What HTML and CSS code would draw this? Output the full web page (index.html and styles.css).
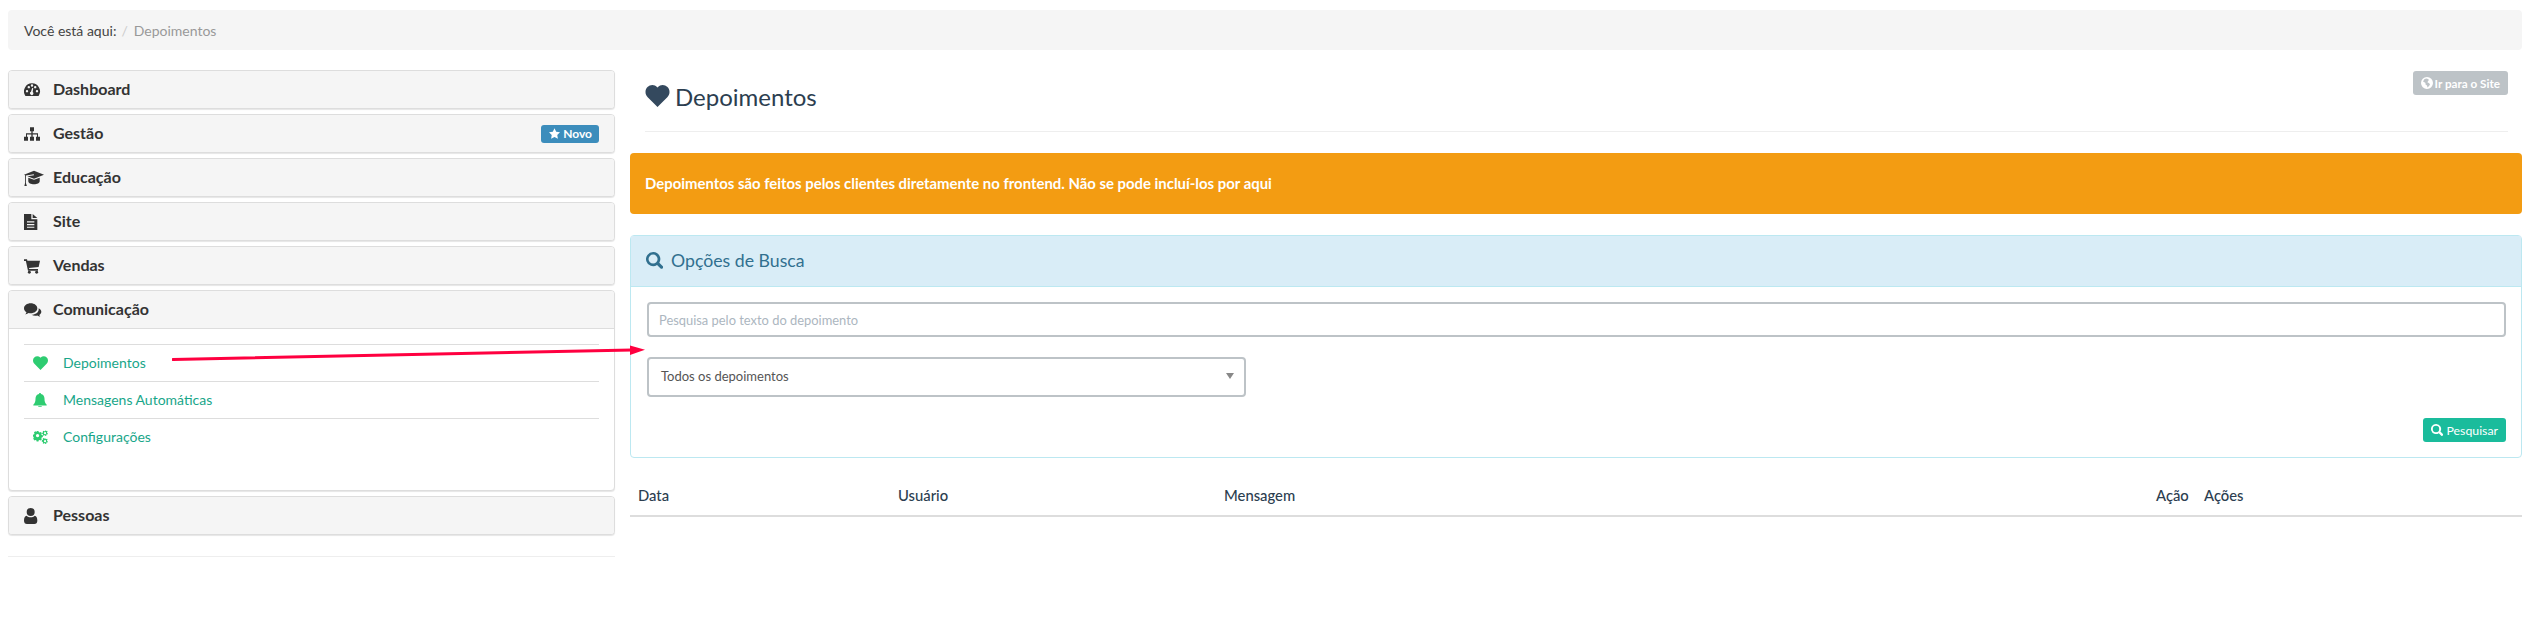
FILE: index.html
```html
<!DOCTYPE html>
<html lang="pt-BR">
<head>
    <meta charset="UTF-8">
    <title>Depoimentos</title>
    <link rel="stylesheet" href="styles.css">
</head>
<body>
    <svg class="icon-defs" width="0" height="0">
        <symbol id="i-heart" viewBox="0 0 24 22"><path d="M12 22 2.200 12.200C-.7 9.300-.7 4.700 2 2.100c2.800-2.700 7-2.700 9.700.1l.3.4.3-.4c2.700-2.800 6.900-2.800 9.700-.1 2.700 2.600 2.700 7.200-.2 10.100z"/></symbol>
        <symbol id="i-search" viewBox="0 0 24 24"><path d="M10 0a10 10 0 1 0 5.600 18.300l5 5a2.300 2.300 0 0 0 3.200-3.200l-5-5A10 10 0 0 0 10 0zm0 3.600a6.400 6.400 0 1 1 0 12.800 6.400 6.400 0 0 1 0-12.800z"/></symbol>
        <symbol id="i-dashboard" viewBox="0 0 24 24" preserveAspectRatio="xMinYMid"><path fill-rule="evenodd" d="M12 2a12 12 0 0 0-10.300 18.200c.3.500.8.800 1.400.8h17.800c.6 0 1.100-.3 1.400-.8A12 12 0 0 0 12 2zM4.500 15.500a1.800 1.800 0 1 1 0-3.600 1.800 1.800 0 0 1 0 3.600zm2.700-6a1.800 1.800 0 1 1 0-3.600 1.800 1.800 0 0 1 0 3.600zM12 7a1.800 1.800 0 1 1 0-3.600A1.800 1.800 0 0 1 12 7zm1.800 11.200a2.500 2.500 0 1 1-3.300-3.500L12.200 9l1.700.5-.9 5.500c1 .6 1.400 2 .8 3.200zm3-8.700a1.800 1.800 0 1 1 0-3.600 1.800 1.800 0 0 1 0 3.600zm2.700 6a1.800 1.800 0 1 1 0-3.600 1.800 1.800 0 0 1 0 3.600z"/></symbol>
        <symbol id="i-sitemap" viewBox="0 0 24 24" preserveAspectRatio="xMinYMid"><path d="M9 2h6v6h-2v3h8v5h3v6h-6v-6h1.500v-3.300H13V16h2v6H9v-6h2v-3.300H4.500V16H6v6H0v-6h3v-5h8V8H9z"/></symbol>
        <symbol id="i-cap" viewBox="0 0 28 22" preserveAspectRatio="xMinYMid"><path d="M14 1 28 6.500 14 12 4.800 8.400 14 7l-.3-1.200-11 1.700v10.600l1.300 4H.5l1-4V7.100L0 6.500zM6 10.500l8 3.100 8-3.100v5c0 2.400-3.600 4.300-8 4.300s-8-1.900-8-4.300z"/></symbol>
        <symbol id="i-file" viewBox="0 0 20 24" preserveAspectRatio="xMinYMid"><path fill-rule="evenodd" d="M0 0h11v8h9v16H0zM4.500 11v1.700h11V11zm0 4v1.700h11V15zm0 4v1.700h11V19zM13 0l7 6h-7z"/></symbol>
        <symbol id="i-cart" viewBox="0 0 24 24" preserveAspectRatio="xMinYMid"><path d="M0 2h4.500l.6 2H24l-2 9.500L7.500 15l.4 1.500H21v2.500H6L2.800 4.500H0z"/><circle cx="8" cy="21.500" r="2.200"/><circle cx="19" cy="21.500" r="2.200"/></symbol>
        <symbol id="i-comments" viewBox="0 0 26 24" preserveAspectRatio="xMinYMid"><path d="M10 2c5.500 0 10 3.300 10 7.500S15.500 17 10 17c-1 0-2-.1-3-.4C5.600 17.600 4 18.300 2 18.600c.8-1 1.400-2 1.700-3.200C1.400 14 0 11.900 0 9.500 0 5.300 4.500 2 10 2z"/><path d="M22 9.500c2.500 1.200 4 3 4 5.200 0 1.900-1.200 3.600-3 4.700.2 1.100.8 2 1.500 2.900-1.700-.2-3.300-.9-4.500-1.900-1 .3-2 .4-3 .4-2.200 0-4.200-.6-5.700-1.600 5.900-.2 10.700-3.600 10.700-8z"/></symbol>
        <symbol id="i-user" viewBox="0 0 20 24" preserveAspectRatio="xMinYMid"><circle cx="10" cy="6" r="6"/><path d="M4 11.500c1.500 1.500 3.500 2.300 6 2.300s4.500-.8 6-2.300c2.700.4 4 3 4 7.500 0 3-1.700 5-4.500 5h-11C1.700 24 0 22 0 19c0-4.500 1.300-7.100 4-7.500z"/></symbol>
        <symbol id="i-bell" viewBox="0 0 24 24" preserveAspectRatio="xMinYMid"><path d="M12 0c1 0 1.700.7 1.700 1.700 3.700.7 6 3.700 6 7.800 0 5 .8 8 3.800 10.500v1.500H.5V20c3-2.500 3.800-5.500 3.800-10.500 0-4.100 2.300-7.100 6-7.800C10.300.7 11 0 12 0zM9 22.500h6a3 3 0 0 1-6 0z"/></symbol>
        <symbol id="i-cogs" viewBox="0 0 26 24" preserveAspectRatio="xMinYMid"><path fill-rule="evenodd" d="M7 5h3.500l.6 2.200 1.600.7 2-1.100 2.400 2.400-1.100 2 .7 1.600 2.300.6v3.400l-2.300.6-.7 1.600 1.100 2-2.400 2.400-2-1.100-1.600.7-.6 2.200H7l-.6-2.200-1.600-.7-2 1.100L.4 19.800l1.100-2-.7-1.600L0 15.600v-3.400l2.200-.6.700-1.600-1.100-2 2.400-2.400 2 1.100 1.600-.7zm1.800 5.700a3.200 3.200 0 1 0 0 6.400 3.200 3.200 0 0 0 0-6.400z" transform="translate(0 -3) scale(.9)"/><path fill-rule="evenodd" d="M21 0l.5 1.500 1.500.4 1.300-.7 1 1.700-1 1 .2 1.600 1.300.7-.5 1.900-1.500-.1-1 1.200.3 1.500-1.900.5-.8-1.300-1.600-.1-1 1.100-1.600-1 .5-1.400-.8-1.400-1.500-.3V5.400l1.500-.3.800-1.400-.5-1.400 1.600-1 1 1.100 1.600-.1zm-.5 3.800a2 2 0 1 0 0 4 2 2 0 0 0 0-4z" transform="translate(2)  scale(.92)"/><path fill-rule="evenodd" d="M21 14l.5 1.500 1.500.4 1.300-.7 1 1.700-1 1 .2 1.600 1.300.7-.5 1.900-1.500-.1-1 1.200.3 1.500-1.900.5-.8-1.300-1.600-.1-1 1.100-1.600-1 .5-1.400-.8-1.400-1.500-.3v-2.800l1.500-.3.800-1.400-.5-1.400 1.600-1 1 1.100 1.600-.1zm-.5 3.800a2 2 0 1 0 0 4 2 2 0 0 0 0-4z" transform="translate(2 1) scale(.92)"/></symbol>
        <symbol id="i-star" viewBox="0 0 24 23"><path d="M12 0l3.700 7.600 8.300 1.200-6 5.900 1.400 8.300-7.400-3.900L4.600 23 6 14.700 0 8.800l8.300-1.200z"/></symbol>
        <symbol id="i-globe" viewBox="0 0 24 24"><path fill-rule="evenodd" d="M12 0a12 12 0 1 0 0 24 12 12 0 0 0 0-24zM7 4l4-1 3 1 2 2-2 2-1 3 3 1 2 3-2 3-3 3-1-4-3-2v-3L6 10l-2-1z"/></symbol>
    </svg>

    <div class="breadcrumb">
        <span>Você está aqui:</span>
        <span class="sep">/</span>
        <span class="current">Depoimentos</span>
    </div>

    <div class="layout">
        <aside class="sidebar">
            <div class="menu-panel">
                <div class="menu-head"><svg class="ico"><use href="#i-dashboard"/></svg><span class="label">Dashboard</span></div>
            </div>
            <div class="menu-panel">
                <div class="menu-head"><svg class="ico"><use href="#i-sitemap"/></svg><span class="label">Gestão</span>
                    <span class="badge"><svg class="ico-star"><use href="#i-star"/></svg>Novo</span>
                </div>
            </div>
            <div class="menu-panel">
                <div class="menu-head"><svg class="ico ico-wide"><use href="#i-cap"/></svg><span class="label">Educação</span></div>
            </div>
            <div class="menu-panel">
                <div class="menu-head"><svg class="ico"><use href="#i-file"/></svg><span class="label">Site</span></div>
            </div>
            <div class="menu-panel">
                <div class="menu-head"><svg class="ico"><use href="#i-cart"/></svg><span class="label">Vendas</span></div>
            </div>
            <div class="menu-panel">
                <div class="menu-head open"><svg class="ico"><use href="#i-comments"/></svg><span class="label">Comunicação</span></div>
                <ul class="submenu">
                    <li><svg class="ico-sub"><use href="#i-heart"/></svg><a href="#">Depoimentos</a></li>
                    <li><svg class="ico-sub"><use href="#i-bell"/></svg><a href="#">Mensagens Automáticas</a></li>
                    <li><svg class="ico-sub"><use href="#i-cogs"/></svg><a href="#">Configurações</a></li>
                </ul>
            </div>
            <div class="menu-panel">
                <div class="menu-head"><svg class="ico"><use href="#i-user"/></svg><span class="label">Pessoas</span></div>
            </div>
            <hr class="side-rule">
        </aside>

        <main class="content">
            <div class="page-header">
                <h1><svg class="ico-title"><use href="#i-heart"/></svg>Depoimentos</h1>
                <a class="btn-site" href="#"><svg class="ico-globe"><use href="#i-globe"/></svg>Ir para o Site</a>
            </div>

            <div class="alert">Depoimentos são feitos pelos clientes diretamente no frontend. Não se pode incluí-los por aqui</div>

            <section class="search-panel">
                <div class="search-head"><svg class="ico-search"><use href="#i-search"/></svg>Opções de Busca</div>
                <div class="search-body">
                    <input class="search-input" type="text" placeholder="Pesquisa pelo texto do depoimento">
                    <div class="select-box"><span>Todos os depoimentos</span><b class="caret"></b></div>
                    <div class="search-actions">
                        <button class="btn-search" type="button"><svg class="ico-btn"><use href="#i-search"/></svg>Pesquisar</button>
                    </div>
                </div>
            </section>

            <table class="list">
                <thead>
                    <tr>
                        <th class="col-date">Data</th>
                        <th class="col-user">Usuário</th>
                        <th class="col-msg">Mensagem</th>
                        <th class="col-act">Ação</th>
                        <th>Ações</th>
                    </tr>
                </thead>
            </table>
        </main>
    </div>

    <svg class="arrow" width="480" height="20" viewBox="0 0 480 20">
        <path d="M1 14.500 460 5" stroke="#ff0040" stroke-width="3" stroke-linecap="round"/>
        <path d="M458 .5 473 4.800 458 10z" fill="#ff0040"/>
    </svg>
</body>
</html>
```

FILE: styles.css
```css
body {
    position: relative;
    margin: 0;
    padding: 10px 10px 0 8px;
    font-family: Lato, "Liberation Sans", sans-serif;
    font-size: 14px;
    color: #2c3e50;
    background: #fff;
}

.icon-defs {
    position: absolute;
}

svg {
    fill: currentColor;
}

.breadcrumb {
    display: flex;
    align-items: center;
    gap: 5px;
    height: 40px;
    padding-left: 16px;
    margin-bottom: 20px;
    background: #f5f5f5;
    border-radius: 4px;
    color: #444;
}

.breadcrumb .sep {
    color: #ccc;
}

.breadcrumb .current {
    margin-left: 1px;
    color: #999;
}

.layout {
    display: flex;
    gap: 15px;
}

.sidebar {
    flex: 0 0 607px;
}

.menu-panel {
    margin-bottom: 5px;
    background: #fff;
    border: 1px solid #ddd;
    border-radius: 4px;
    box-shadow: 0 1px 1px rgba(0, 0, 0, 0.1);
}

.menu-head {
    display: flex;
    align-items: center;
    height: 37px;
    padding: 0 15px;
    background: #f5f5f5;
    border-radius: 3px;
    font-size: 16px;
    font-weight: 700;
    color: #333;
}

.menu-head .label {
    padding-bottom: 2px;
}

.menu-head.open {
    border-bottom: 1px solid #ddd;
    border-radius: 3px 3px 0 0;
}

.ico {
    flex: 0 0 auto;
    width: 18px;
    height: 16px;
    margin-right: 11px;
}

.ico-wide {
    width: 20px;
    margin-right: 9px;
}

.badge {
    display: flex;
    align-items: center;
    margin-left: auto;
    height: 18px;
    padding: 0 7px 0 8px;
    background: #3c8dbc;
    border-radius: 3px;
    color: #fff;
    font-size: 12px;
}

.ico-star {
    width: 11px;
    height: 11px;
    margin-right: 3px;
}

.submenu {
    list-style: none;
    margin: 15px 15px 0;
    padding: 0 0 35px;
}

.submenu li {
    display: flex;
    align-items: center;
    box-sizing: border-box;
    height: 37px;
    padding: 0 0 1px 9px;
    border-top: 1px solid #ddd;
    color: #2ecc71;
}

.submenu a {
    color: #18a689;
    text-decoration: none;
}

.ico-sub {
    flex: 0 0 auto;
    width: 15px;
    height: 14px;
    margin-right: 15px;
}

.side-rule {
    margin: 21px 0 0;
    border: 0;
    border-top: 1px solid #eee;
}

.content {
    flex: 1;
    min-width: 0;
}

.page-header {
    display: flex;
    justify-content: space-between;
    margin: 1px 14px 21px 15px;
    height: 60px;
    border-bottom: 1px solid #eee;
}

.page-header h1 {
    display: flex;
    align-items: center;
    height: 50px;
    margin: 0;
    font-size: 24px;
    font-weight: 400;
    color: #2c3e50;
}

.ico-title {
    width: 25px;
    height: 22px;
    margin-right: 5px;
    fill: #34495e;
}

.btn-site {
    display: flex;
    align-items: center;
    height: 24px;
    padding: 0 8px;
    background: #bdc3c7;
    border-radius: 3px;
    color: #fff;
    font-size: 11.7px;
    font-weight: 700;
    text-decoration: none;
}

.ico-globe {
    width: 12px;
    height: 12px;
    margin-right: 2px;
}

.alert {
    display: flex;
    align-items: center;
    box-sizing: border-box;
    height: 61px;
    padding: 0 0 2px 15px;
    margin-bottom: 21px;
    background: #f39c12;
    border-radius: 4px;
    color: #fff;
    font-size: 14.9px;
    font-weight: 700;
}

.search-panel {
    border: 1px solid #bce8f1;
    border-radius: 4px;
}

.search-head {
    display: flex;
    align-items: center;
    box-sizing: border-box;
    height: 51px;
    padding: 0 0 2px 15px;
    background: #d9edf7;
    border-bottom: 1px solid #bce8f1;
    color: #31708f;
    font-size: 17.7px;
}

.ico-search {
    width: 17px;
    height: 17px;
    margin-right: 8px;
}

.search-body {
    padding: 15px 15px 15px 16px;
}

.search-input {
    display: block;
    box-sizing: border-box;
    width: 100%;
    height: 35px;
    padding: 0 10px;
    border: 2px solid #bdc3c7;
    border-radius: 4px;
    font-family: inherit;
    font-size: 12.9px;
    color: #2c3e50;
}

.search-input::placeholder {
    color: #acb6c0;
}

.select-box {
    display: flex;
    align-items: center;
    justify-content: space-between;
    box-sizing: border-box;
    width: 599px;
    height: 40px;
    margin-top: 20px;
    padding: 0 10px 2px 12px;
    border: 2px solid #bdc3c7;
    border-radius: 4px;
    color: #555;
    font-size: 13px;
}

.caret {
    width: 0;
    height: 0;
    border-left: 4px solid transparent;
    border-right: 4px solid transparent;
    border-top: 6px solid #888;
}

.search-actions {
    display: flex;
    justify-content: flex-end;
    margin-top: 21px;
}

.btn-search {
    display: flex;
    align-items: center;
    height: 24px;
    padding: 0 8px;
    border: 0;
    border-radius: 3px;
    background: #1abc9c;
    color: #fff;
    font-family: inherit;
    font-size: 12.3px;
}

.ico-btn {
    width: 12px;
    height: 12px;
    margin-right: 4px;
}

.list {
    width: 100%;
    margin-top: 20px;
    border-collapse: collapse;
    table-layout: fixed;
}

.list th {
    height: 34px;
    padding: 0 8px 3px;
    border-bottom: 2px solid #ddd;
    font-size: 14.8px;
    font-weight: 500;
    text-align: left;
    color: #2c3e50;
}

.col-date {
    width: 244px;
}

.col-user {
    width: 310px;
}

.col-msg {
    width: 916px;
}

.col-act {
    width: 32px;
}

.arrow {
    position: absolute;
    left: 172px;
    top: 345px;
}
```
